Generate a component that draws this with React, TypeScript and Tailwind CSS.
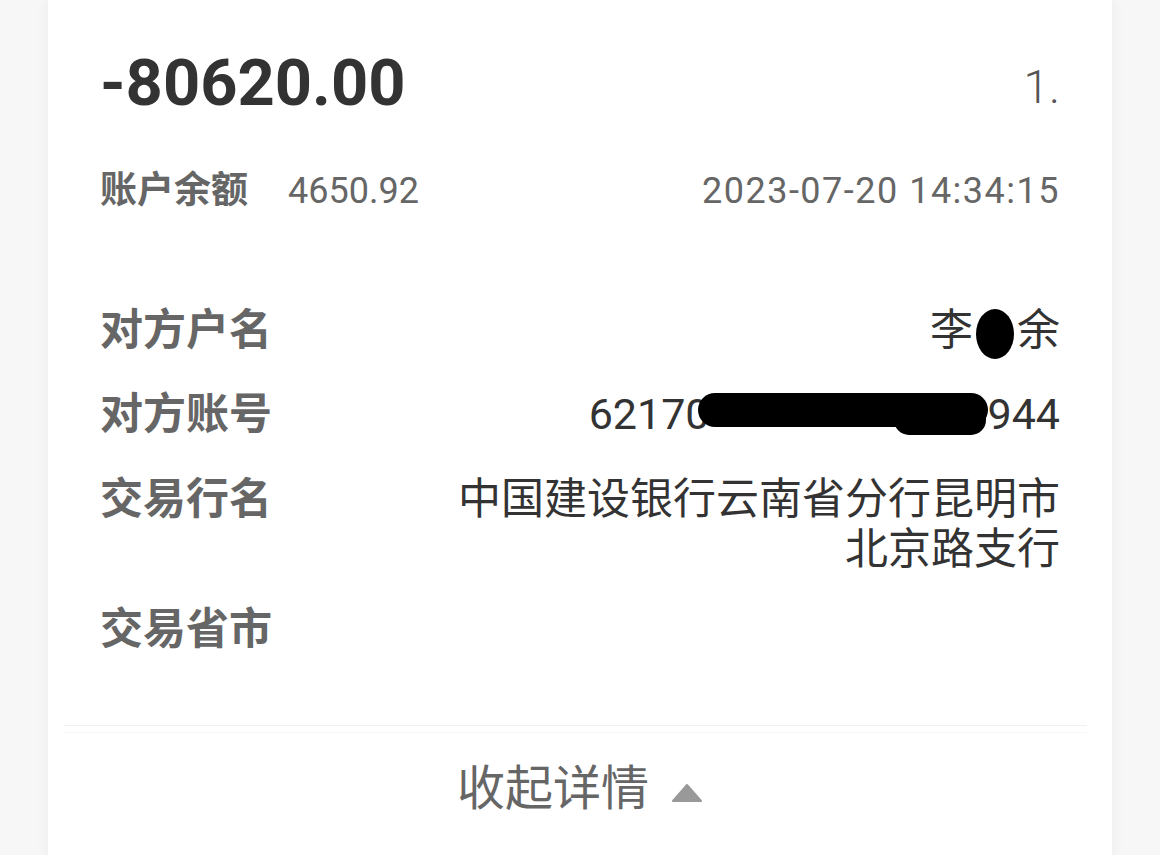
const font = { fontFamily: 'Roboto, "Noto Sans CJK SC", sans-serif' };

function DetailRow({ label, children, className = "" }: { label: string; children: React.ReactNode; className?: string }) {
  return (
    <div className={`flex items-start justify-between ${className}`}>
      <div className="shrink-0 text-[43px] leading-[50px] font-bold text-[#666]">{label}</div>
      <div className="flex-1 text-right text-[43px] leading-[50px] text-[#333]">{children}</div>
    </div>
  );
}

export default function App() {
  return (
    <div className="min-h-screen bg-[#f7f7f7] flex justify-center overflow-hidden" style={font}>
      <div className="w-[1064px] bg-white shadow-[0_0_14px_rgba(0,0,0,0.05)] flex flex-col">
        <div className="px-[52px] pt-[51px]">
          <div className="flex items-start justify-between">
            <div className="text-[65px] leading-none font-bold text-[#333]">-80620.00</div>
            <div className="mt-[13px] text-[46px] leading-none font-light text-[#555]">1.</div>
          </div>

          <div className="mt-[50px] flex items-center justify-between h-[50px]">
            <div className="flex items-center">
              <span className="text-[37px] font-bold text-[#666]">账户余额</span>
              <span className="ml-[40px] text-[36px] text-[#666]">4650.92</span>
            </div>
            <span className="text-[36px] text-[#666] tracking-[1.5px]">2023-07-20 14:34:15</span>
          </div>

          <DetailRow label="对方户名" className="mt-[89px]">
            李
            <span className="inline-block w-[38px] h-[50px] mx-[3px] rounded-[50%] bg-black align-[-14px]" />
            余
          </DetailRow>
          <DetailRow label="对方账号" className="mt-[30px]">
            62170
            <svg
              viewBox="0 0 290 46"
              className="inline-block w-[290px] h-[46px] -ml-[12px] align-[-8px]"
              aria-hidden="true"
            >
              <rect x="0" y="2" width="290" height="34" rx="17" fill="#000" />
              <rect x="196" y="10" width="92" height="34" rx="15" fill="#000" />
            </svg>
            944
          </DetailRow>
          <DetailRow label="交易行名" className="mt-[35px]">
            中国建设银行云南省分行昆明市
            <br />
            北京路支行
          </DetailRow>
          <DetailRow label="交易省市" className="mt-[30px]">
            {""}
          </DetailRow>
        </div>

        <div className="mt-[71px] ml-[16px] mr-[25px] h-px bg-[#f0f0f0]" />
        <div className="ml-[16px] mr-[25px] mt-[6px] h-px bg-[#f8f8f8]" />

        <div className="flex items-center justify-center gap-[22px] pt-[26px] pb-[40px]">
          <span className="text-[48px] leading-[60px] text-[#666]">收起详情</span>
          <svg viewBox="0 0 32 20" className="w-[32px] h-[20px] mt-[8px]" aria-hidden="true">
            <path d="M16 2 L30 18 L2 18 Z" fill="#999" stroke="#999" strokeWidth="2" strokeLinejoin="round" />
          </svg>
        </div>
      </div>
    </div>
  );
}
